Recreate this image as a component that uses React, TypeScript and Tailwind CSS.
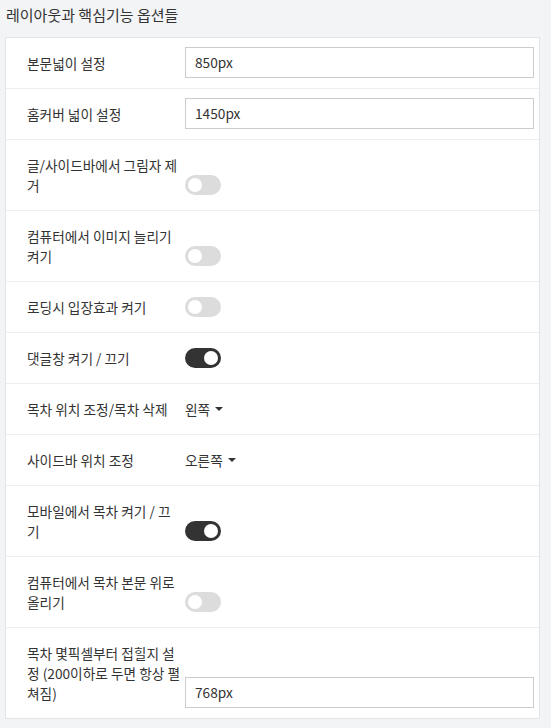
import React from "react";

type Row =
  | { label: string[]; kind: "input"; value: string }
  | { label: string[]; kind: "toggle"; on: boolean }
  | { label: string[]; kind: "select"; value: string };

const rows: Row[] = [
  { label: ["본문넓이 설정"], kind: "input", value: "850px" },
  { label: ["홈커버 넓이 설정"], kind: "input", value: "1450px" },
  { label: ["글/사이드바에서 그림자 제", "거"], kind: "toggle", on: false },
  { label: ["컴퓨터에서 이미지 늘리기", "켜기"], kind: "toggle", on: false },
  { label: ["로딩시 입장효과 켜기"], kind: "toggle", on: false },
  { label: ["댓글창 켜기 / 끄기"], kind: "toggle", on: true },
  { label: ["목차 위치 조정/목차 삭제"], kind: "select", value: "왼쪽" },
  { label: ["사이드바 위치 조정"], kind: "select", value: "오른쪽" },
  { label: ["모바일에서 목차 켜기 / 끄", "기"], kind: "toggle", on: true },
  { label: ["컴퓨터에서 목차 본문 위로", "올리기"], kind: "toggle", on: false },
  {
    label: ["목차 몇픽셀부터 접힐지 설", "정 (200이하로 두면 항상 펼", "쳐짐)"],
    kind: "input",
    value: "768px",
  },
];

function Toggle({ on }: { on: boolean }) {
  return (
    <div
      className={
        "relative w-[36px] h-[20px] rounded-full " +
        (on ? "bg-[#333333]" : "bg-[#dcdcdc]")
      }
    >
      <div
        className={
          "absolute top-[3px] w-[14px] h-[14px] rounded-full bg-white " +
          (on ? "left-[19px]" : "left-[3px]")
        }
      />
    </div>
  );
}

export default function App() {
  return (
    <div
      className="min-h-[728px] w-[551px] bg-[#f3f4f6] text-[#333333]"
      style={{ fontFamily: '"Noto Sans CJK KR", "Noto Sans", sans-serif' }}
    >
      <div className="h-[37px] pl-[6px] pt-[3px] text-[15px] leading-[24px] text-[#333]">
        레이아웃과 핵심기능 옵션들
      </div>
      <div className="ml-[5px] w-[535px] bg-white border border-[#e2e4e8]">
        {rows.map((r, i) => (
          <div
            key={i}
            className={
              "flex items-end pl-[21px] pr-[5px] " +
              (i < rows.length - 1 ? "border-b border-[#eeeeee]" : "")
            }
          >
            <div className="w-[152px] shrink-0 py-[15px] text-[13.7px] leading-[20px] text-[#333]">
              {r.label.map((l, j) => (
                <div key={j} className="whitespace-nowrap">
                  {l}
                </div>
              ))}
            </div>
            <div className="ml-[6px] flex-1">
              {r.kind === "input" && (
                <div className="pb-[10px]">
                  <div className="h-[31px] border border-[#cccccc] bg-white pl-[9px] flex items-center text-[13.7px] text-[#333]">
                    {r.value}
                  </div>
                </div>
              )}
              {r.kind === "toggle" && (
                <div className="pb-[15px]">
                  <Toggle on={r.on} />
                </div>
              )}
              {r.kind === "select" && (
                <div className="pb-[15px] flex items-center text-[13.7px] leading-[20px] text-[#333]">
                  <span>{r.value}</span>
                  <svg width="8" height="4" viewBox="0 0 8 4" className="ml-[5px]">
                    <polygon points="0,0 8,0 4,4" fill="#333" />
                  </svg>
                </div>
              )}
            </div>
          </div>
        ))}
      </div>
    </div>
  );
}
